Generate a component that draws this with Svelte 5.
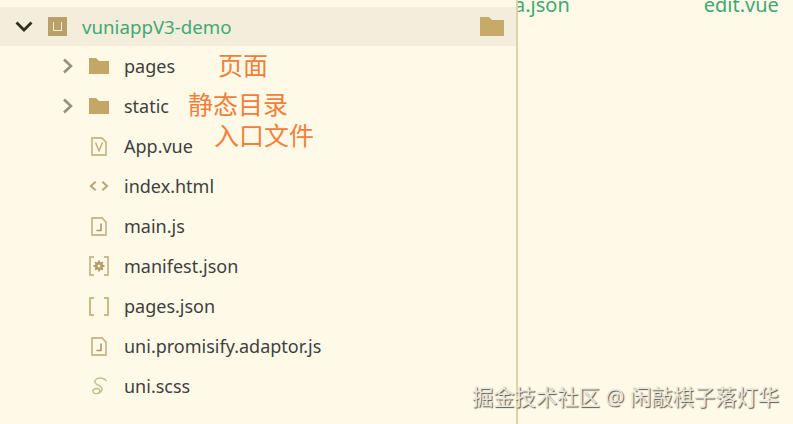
<script>
  const files = [
    { name: 'pages', icon: 'folder', arrow: true },
    { name: 'static', icon: 'folder', arrow: true },
    { name: 'App.vue', icon: 'vue' },
    { name: 'index.html', icon: 'html' },
    { name: 'main.js', icon: 'js' },
    { name: 'manifest.json', icon: 'manifest' },
    { name: 'pages.json', icon: 'json' },
    { name: 'uni.promisify.adaptor.js', icon: 'js' },
    { name: 'uni.scss', icon: 'scss' }
  ]
</script>

<div class="page">
  <aside class="tree">
    <div class="root">
      <svg class="chevron" width="18" height="12" viewBox="0 0 18 12">
        <path d="M1.500 1.500l7.500 7.500 7.500-7.500" fill="none" stroke="#2f2c22" stroke-width="2.800" />
      </svg>
      <span class="logo"><span class="logo-u"></span></span>
      <span class="root-name">vuniappV3-demo</span>
      <svg class="root-folder" width="24" height="19" viewBox="0 0 24 19">
        <path d="M0 0h9l3 3h12v16H0z" fill="#c8aa68" />
      </svg>
    </div>

    {#each files as f}
      <div class="row">
        <span class="arrow">
          {#if f.arrow}
            <svg width="12" height="16" viewBox="0 0 12 16">
              <path d="M2 1.500l7 6.500-7 6.500" fill="none" stroke="#96907e" stroke-width="2.600" />
            </svg>
          {/if}
        </span>
        <span class="icon">
          {#if f.icon === 'folder'}
            <svg width="20" height="16" viewBox="0 0 20 16">
              <path d="M0 0h7l3 3h10v13H0z" fill="#c2a766" />
            </svg>
          {:else if f.icon === 'vue'}
            <svg width="16" height="19" viewBox="0 0 16 19" fill="none" stroke="#cdb98a" stroke-width="1.800">
              <path d="M1 1h10l4 4v13H1z" />
              <path d="M4.500 5.500l3.500 8.500 3.500-8.500" stroke="#bfa978" stroke-width="1.400" />
            </svg>
          {:else if f.icon === 'html'}
            <svg width="21" height="12" viewBox="0 0 21 12" fill="none" stroke="#b9a77f" stroke-width="2.200">
              <path d="M7 1.500L2 6l5 4.500M14 1.500L19 6l-5 4.500" />
            </svg>
          {:else if f.icon === 'js'}
            <svg width="16" height="19" viewBox="0 0 16 19" fill="none" stroke="#cdb98a" stroke-width="1.800">
              <path d="M1 1h10l4 4v13H1z" />
              <path d="M10 6.500v7H5.500" stroke="#a89468" stroke-width="1.500" />
            </svg>
          {:else if f.icon === 'manifest'}
            <svg width="20" height="20" viewBox="0 0 20 20" fill="none" stroke="#cdb98a" stroke-width="1.800">
              <path d="M5 1H1v18h4M15 1h4v18h-4" />
              <circle cx="10" cy="10" r="2.800" stroke="#b39c69" stroke-width="2.600" />
              <path d="M10 4.500v2M10 13.500v2M4.500 10h2M13.500 10h2M6.100 6.100l1.400 1.400M12.500 12.500l1.400 1.400M6.100 13.900l1.400-1.400M12.500 7.500l1.400-1.400" stroke="#b39c69" stroke-width="1.800" />
            </svg>
          {:else if f.icon === 'json'}
            <svg width="20" height="19" viewBox="0 0 20 19" fill="none" stroke="#cdb98a" stroke-width="2">
              <path d="M5 1H1v17h4M15 1h4v17h-4" />
            </svg>
          {:else if f.icon === 'scss'}
            <svg width="17" height="18" viewBox="0 0 17 18" fill="none" stroke="#c8bc8e" stroke-width="1.500">
              <path d="M15.500 4C14 1 8 0 5 2.500 2 5 5 7 8 8.500c3 1.500 4 3.500 2 6-2 2.500-7 3-8 .5-1-2.500 3-4.500 6-3 1.500 1 1 3.500-.5 4" />
            </svg>
          {/if}
        </span>
        <span class="name">{f.name}</span>
      </div>
    {/each}
  </aside>

  <main class="editor">
    <div class="tabs">
      <span class="tab-a">a.json</span>
      <span class="tab-b">edit.vue</span>
    </div>
  </main>

  <span class="note note-pages">页面</span>
  <span class="note note-static">静态目录</span>
  <span class="note note-entry">入口文件</span>
  <span class="mark">掘金技术社区 @ 闲敲棋子落灯华</span>
</div>

<style>
  :global(body) {
    margin: 0;
    background: #fefae7;
  }

  .page {
    position: relative;
    display: flex;
    width: 793px;
    height: 424px;
    overflow: hidden;
    background: #fefae7;
    font-family: 'Noto Sans', 'Noto Sans CJK SC', sans-serif;
  }

  .tree {
    box-sizing: border-box;
    width: 518px;
    flex: none;
    padding-top: 7px;
    border-right: 2px solid #dfd2a4;
  }

  .root {
    display: flex;
    align-items: center;
    height: 39px;
    padding: 0 12px 0 15px;
    background: #f3eedb;
  }

  .chevron {
    margin-right: 15px;
  }

  .logo {
    display: flex;
    align-items: center;
    justify-content: center;
    box-sizing: border-box;
    width: 19px;
    height: 19px;
    background: #b8a068;
  }

  .logo-u {
    width: 7px;
    height: 8px;
    border: 1.500px solid #f3eedb;
    border-top: none;
  }

  .root-name {
    margin-left: 15px;
    font-size: 18.700px;
    color: #42a873;
  }

  .root-folder {
    margin-left: auto;
  }

  .row {
    display: flex;
    align-items: center;
    height: 40px;
    padding-left: 62px;
  }

  .arrow {
    display: flex;
    width: 12px;
    margin-right: 15px;
  }

  .icon {
    display: flex;
    justify-content: center;
    width: 20px;
    margin-right: 15px;
  }

  .name {
    font-size: 18px;
    color: #3f3f3f;
  }

  .editor {
    flex: 1;
    min-width: 0;
    overflow: hidden;
  }

  .tabs {
    display: flex;
    margin-top: -9px;
    font-size: 20px;
    color: #42a873;
    white-space: nowrap;
  }

  .tab-a {
    margin-left: -4px;
  }

  .tab-b {
    margin-left: 134px;
  }

  .note {
    position: absolute;
    font-size: 25px;
    line-height: 32px;
    color: #f2803a;
    white-space: nowrap;
  }

  .note-pages {
    left: 218px;
    top: 49px;
  }

  .note-static {
    left: 188px;
    top: 88px;
  }

  .note-entry {
    left: 214px;
    top: 119px;
  }

  .mark {
    position: absolute;
    left: 472px;
    top: 383px;
    font-size: 21.300px;
    line-height: 28px;
    color: #e9e6da;
    text-shadow: 1px 1px 1px #555;
    white-space: nowrap;
  }
</style>
